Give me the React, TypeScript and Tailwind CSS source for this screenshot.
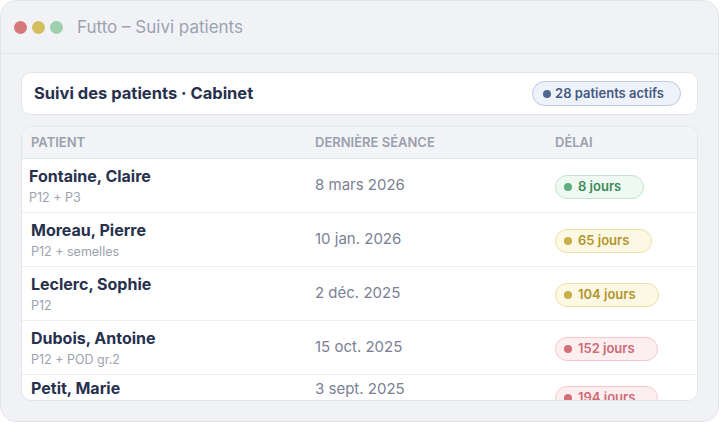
import React from "react";

type Tone = "green" | "yellow" | "red";

const tones: Record<Tone, { box: string; dot: string }> = {
  green: { box: "bg-[#edf9f2] border-[#c3e5cf] text-[#3f8a5a]", dot: "bg-[#5cae7a]" },
  yellow: { box: "bg-[#fdf8e3] border-[#eedfa6] text-[#ae962c]", dot: "bg-[#c8af48]" },
  red: { box: "bg-[#fdeef0] border-[#f5c8cd] text-[#cd6b75]", dot: "bg-[#d26f79]" },
};

const rows: { name: string; sub: string; date: string; delay: string; tone: Tone }[] = [
  { name: "Fontaine, Claire", sub: "P12 + P3", date: "8 mars 2026", delay: "8 jours", tone: "green" },
  { name: "Moreau, Pierre", sub: "P12 + semelles", date: "10 jan. 2026", delay: "65 jours", tone: "yellow" },
  { name: "Leclerc, Sophie", sub: "P12", date: "2 déc. 2025", delay: "104 jours", tone: "yellow" },
  { name: "Dubois, Antoine", sub: "P12 + POD gr.2", date: "15 oct. 2025", delay: "152 jours", tone: "red" },
  { name: "Petit, Marie", sub: "P12", date: "3 sept. 2025", delay: "194 jours", tone: "red" },
];

function Badge({ tone, label }: { tone: Tone; label: string }) {
  return (
    <span className={`inline-flex h-[24px] rounded-full border items-center gap-[6px] pl-[8px] pr-[22px] text-[13px] font-semibold ${tones[tone].box}`}>
      <span className={`w-[8px] h-[8px] rounded-full ${tones[tone].dot}`} />
      {label}
    </span>
  );
}

export default function App() {
  return (
    <div className="w-[720px] h-[423px] bg-white" style={{ fontFamily: "Inter, 'Noto Sans', sans-serif" }}>
      <div className="w-[719px] h-[422px] rounded-[16px] border border-[#e3e5ea] bg-[#f1f2f6] flex flex-col overflow-hidden">
        <div className="h-[53px] shrink-0 border-b border-[#e3e5ea] flex items-center pl-[13px] gap-[5px]">
          <span className="w-[13px] h-[13px] rounded-full bg-[#d8777a]" />
          <span className="w-[13px] h-[13px] rounded-full bg-[#d3be5f]" />
          <span className="w-[13px] h-[13px] rounded-full bg-[#9fd0ad]" />
          <span className="ml-[9px] text-[17px] text-[#9ca2b0] leading-none">Futto – Suivi patients</span>
        </div>
        <div className="flex-1 min-h-0 flex flex-col pt-[18px] pb-[20px] pl-[20px] pr-[20px] gap-[11px]">
          <div className="h-[43px] shrink-0 rounded-[10px] border border-[#e3e5ea] bg-white flex items-center justify-between pl-[12px] pr-[16px]">
            <span className="text-[16.5px] font-bold text-[#27304d]">Suivi des patients · Cabinet</span>
            <span className="h-[25px] rounded-full border border-[#bccae3] bg-[#eef2fb] flex items-center gap-[4px] pl-[10px] pr-[16px] text-[13px] font-semibold text-[#46597f]">
              <span className="w-[8px] h-[8px] rounded-full bg-[#4f6690]" />
              28 patients actifs
            </span>
          </div>
          <div className="flex-1 min-h-0 rounded-[10px] border border-[#e3e5ea] bg-white overflow-hidden flex flex-col">
            <div className="h-[32px] shrink-0 bg-[#f3f4f7] border-b border-[#e6e8ec] grid grid-cols-[284px_240px_1fr] items-center px-[9px] text-[13px] font-semibold text-[#9aa0ad] uppercase">
              <span>Patient</span>
              <span>Dernière séance</span>
              <span>Délai</span>
            </div>
            {rows.slice(0, 4).map((r, i) => (
              <div
                key={r.name}
                className={`h-[54px] shrink-0 grid grid-cols-[284px_240px_1fr] items-center pr-[9px] border-b border-[#eceef1] ${i === 0 ? "pl-[7px]" : "pl-[9px]"}`}
              >
                <div className={`flex flex-col gap-[4px] ${i === 0 ? "pr-[2px]" : ""}`}>
                  <span className="text-[16px] leading-[20px] font-bold text-[#27304d]">{r.name}</span>
                  <span className="text-[12.5px] leading-[16px] text-[#9ca3af]">{r.sub}</span>
                </div>
                <span className={`text-[15px] text-[#7a8194] ${i === 0 ? "pl-[2px]" : ""}`}>{r.date}</span>
                <div className={i === 0 ? "pl-[2px]" : ""}>
                  <Badge tone={r.tone} label={r.delay} />
                </div>
              </div>
            ))}
            <div className="flex-1 min-h-0 grid grid-cols-[284px_240px_1fr] items-start pl-[9px] pr-[9px]">
              <div className="flex flex-col gap-[4px] pt-[3px]">
                <span className="text-[16px] leading-[20px] font-bold text-[#27304d]">{rows[4].name}</span>
                <span className="text-[12.5px] leading-[16px] text-[#9ca3af]">{rows[4].sub}</span>
              </div>
              <span className="text-[15px] leading-[18px] text-[#7a8194] pt-[5px]">{rows[4].date}</span>
              <div className="pt-[9px]">
                <Badge tone={rows[4].tone} label={rows[4].delay} />
              </div>
            </div>
          </div>
        </div>
      </div>
    </div>
  );
}
